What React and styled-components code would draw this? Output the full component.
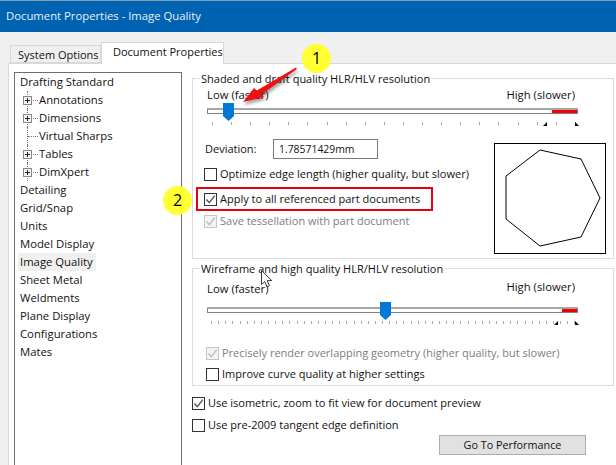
import React from 'react';
import styled, { createGlobalStyle } from 'styled-components';

const GlobalStyle = createGlobalStyle`
  html, body {
    margin: 0;
    padding: 0;
    background: #f0f0f0;
  }
  * {
    box-sizing: border-box;
  }
`;

const Dialog = styled.div`
  position: relative;
  width: 616px;
  height: 465px;
  overflow: hidden;
  background: #f0f0f0;
  color: #111;
  font-family: 'Open Sans', 'Noto Sans', sans-serif;
  font-size: 11.3px;
  line-height: 16px;
  white-space: nowrap;
`;

const TitleBar = styled.div`
  height: 32px;
  padding: 7px 0 0 6px;
  background: #0063b1;
  border-top: 1px solid #7f9fb9;
  color: #e8f1f8;
`;

const TabRow = styled.div`
  display: flex;
  align-items: flex-end;
  height: 31px;
  padding-left: 10px;
`;

const Tab = styled.div`
  position: relative;
  z-index: 1;
  height: ${(p) => (p.$active ? '22px' : '18px')};
  margin-bottom: ${(p) => (p.$active ? '-1px' : '0')};
  padding: ${(p) => (p.$active ? '1px 0 0 11px' : '1px 0 0 7px')};
  width: ${(p) => (p.$active ? '123px' : '91px')};
  background: ${(p) => (p.$active ? '#fff' : '#f0f0f0')};
  border: 1px solid #d9d9d9;
  border-bottom: ${(p) => (p.$active ? 'none' : '1px solid #d9d9d9')};
  font-size: 11px;
`;

const Panel = styled.div`
  display: flex;
  height: 402px;
  margin-left: 8px;
  padding: 8px 0 0 5px;
  background: #fff;
  border: 1px solid #d9d9d9;
  border-width: 1px 0 0 1px;
`;

const TreeBox = styled.div`
  flex: none;
  width: 168px;
  height: 400px;
  padding-left: 3px;
  border: 1px solid #6e6e6e;
`;

const TreeRow = styled.div`
  position: relative;
  display: flex;
  align-items: center;
  height: 18px;
  padding-left: ${(p) => (p.$child ? '21px' : '2px')};
`;

const Selected = styled.span`
  margin-left: -2px;
  padding: 1px 2px;
  width: 78px;
  background: #f0f0f0;
`;

const Dots = styled.span`
  position: absolute;
  left: 9px;
  top: 0;
  width: 11px;
  height: 18px;
  border-left: 1px dotted #777;
  &::after {
    content: '';
    position: absolute;
    left: 0;
    top: 9px;
    width: 10px;
    border-top: 1px dotted #777;
  }
`;

const Expander = styled.span`
  position: absolute;
  z-index: 1;
  left: 5px;
  top: 5px;
  width: 9px;
  height: 9px;
  background: #f4f4f4;
  border: 1px solid #8a8a8a;
  &::before {
    content: '';
    position: absolute;
    left: 1px;
    top: 3px;
    width: 5px;
    height: 1px;
    background: #222;
  }
  &::after {
    content: '';
    position: absolute;
    left: 3px;
    top: 1px;
    width: 1px;
    height: 5px;
    background: #222;
  }
`;

const Side = styled.div`
  flex: none;
  width: 422px;
  margin-left: 10px;
  margin-top: 6px;
`;

const Group = styled.div`
  height: ${(p) => p.$height}px;
  margin-bottom: ${(p) => p.$gap || 0}px;
  padding: 0 14px;
  border: 1px solid #dcdcdc;
`;

const Legend = styled.div`
  width: fit-content;
  height: 16px;
  margin: -8px 0 0 -7px;
  padding: 0 2px 0 1px;
  background: #fff;
  font-size: 11px;
`;

const SliderLabels = styled.div`
  display: flex;
  justify-content: space-between;
  align-items: flex-start;
  width: 371px;
  height: ${(p) => p.$height}px;
  padding-right: 3px;
`;

const SliderLabel = styled.span`
  margin-top: ${(p) => p.$top || 0}px;
`;

const Slider = styled.div`
  position: relative;
  width: 371px;
  height: 18px;
  margin-top: ${(p) => p.$top || 0}px;
  padding-top: 5px;
`;

const Track = styled.div`
  position: relative;
  height: 6px;
  background: #fff;
  border: 1px solid #808080;
  border-top: 2px solid #a6a6a6;
  border-radius: 1px;
`;

const TrackEnd = styled.div`
  position: absolute;
  right: 0;
  top: 0;
  bottom: 0;
  width: ${(p) => p.$width}px;
  background: #f00000;
`;

const Thumb = styled.div`
  position: absolute;
  left: ${(p) => p.$left}px;
  top: 0;
  width: 11px;
  height: 18px;
  background: #0078d7;
  clip-path: polygon(0 0, 100% 0, 100% 72%, 50% 100%, 0 72%);
`;

const TickRow = styled.div`
  position: relative;
  display: flex;
  justify-content: space-between;
  width: ${(p) => p.$width}px;
  height: 3px;
  margin: 1px 0 0 ${(p) => p.$start}px;
`;

const TickMark = styled.span`
  flex: none;
  width: 1px;
  height: 3px;
  background: #ababab;
`;

const Marker = styled.span`
  position: absolute;
  left: ${(p) => p.$left}px;
  top: 0;
  width: 0;
  height: 0;
  border-bottom: 4px solid #000;
  border-left: ${(p) => (p.$flip ? '0' : '4px solid transparent')};
  border-right: ${(p) => (p.$flip ? '4px solid transparent' : '0')};
`;

const Lower = styled.div`
  display: flex;
  justify-content: space-between;
  width: 402px;
  margin: 14px 0 0 -3px;
`;

const LowerLeft = styled.div`
  display: flex;
  flex-direction: column;
`;

const DeviationRow = styled.div`
  display: flex;
  align-items: center;
  height: 20px;
  margin-left: 1px;
  font-size: 11px;
`;

const DeviationLabel = styled.span`
  width: 68px;
`;

const DeviationInput = styled.div`
  width: 105px;
  height: 20px;
  padding: 1px 0 0 5px;
  border: 1px solid #7a7a7a;
  font-size: 10.4px;
`;

const Preview = styled.svg`
  display: block;
  flex: none;
  width: 112px;
  height: 111px;
  margin-top: 4px;
  background: #fff;
  border: 1px solid #000;
`;

const CheckRow = styled.div`
  position: relative;
  display: flex;
  align-items: center;
  gap: 3px;
  height: 16px;
  margin-top: ${(p) => p.$top || 0}px;
  margin-left: ${(p) => p.$left || 0}px;
  color: ${(p) => (p.$disabled ? '#7d7d7d' : '#111')};
  font-size: 11px;
`;

const Box = styled.span`
  display: block;
  flex: none;
  width: 13px;
  height: 13px;
  background: ${(p) => (p.$disabled ? '#f4f4f4' : '#fff')};
  border: 1px solid ${(p) => (p.$disabled ? '#c6c6c6' : '#333')};
`;

const Tick = styled.svg`
  display: block;
  width: 11px;
  height: 11px;
  fill: none;
  stroke: ${(p) => (p.$disabled ? '#bcbcbc' : '#555')};
  stroke-width: 1.4;
`;

const Callout = styled.span`
  position: absolute;
  left: -8px;
  top: -4px;
  width: 237px;
  height: 24px;
  border: 2px solid #e8000e;
  pointer-events: none;
`;

const Badge = styled.span`
  position: absolute;
  z-index: 3;
  display: flex;
  align-items: center;
  justify-content: center;
  width: 29px;
  height: 29px;
  padding-bottom: 2px;
  border-radius: 50%;
  background: #ffff33;
  color: #000;
  font-size: 16px;
`;

const BadgeOne = styled(Badge)`
  left: 302px;
  top: 44px;
`;

const BadgeTwo = styled(Badge)`
  left: -41px;
  top: -5px;
`;

const PerfButton = styled.div`
  width: 147px;
  height: 20px;
  margin: 2px 0 0 247px;
  padding-top: 1px;
  text-align: center;
  background: #e1e1e1;
  border: 1px solid #adadad;
  font-size: 10.8px;
`;

const Overlay = styled.svg`
  position: absolute;
  z-index: 4;
  left: ${(p) => p.$left}px;
  top: ${(p) => p.$top}px;
  overflow: visible;
`;

const treeItems = [
  { label: 'Drafting Standard' },
  { label: 'Annotations', child: true, expand: true },
  { label: 'Dimensions', child: true, expand: true },
  { label: 'Virtual Sharps', child: true },
  { label: 'Tables', child: true, expand: true },
  { label: 'DimXpert', child: true, expand: true },
  { label: 'Detailing' },
  { label: 'Grid/Snap' },
  { label: 'Units' },
  { label: 'Model Display' },
  { label: 'Image Quality', selected: true },
  { label: 'Sheet Metal' },
  { label: 'Weldments' },
  { label: 'Plane Display' },
  { label: 'Configurations' },
  { label: 'Mates' },
];

const Check = ({ checked, disabled, label, top, left, children }) => (
  <CheckRow $top={top} $left={left} $disabled={disabled}>
    <Box $disabled={disabled}>
      {checked && (
        <Tick viewBox="0 0 11 11" $disabled={disabled}>
          <path d="M1.5 5.5 L4.3 8.6 L9.8 1.6" />
        </Tick>
      )}
    </Box>
    <span>{label}</span>
    {children}
  </CheckRow>
);

const Ticks = ({ count, start, width, children }) => (
  <TickRow $start={start} $width={width}>
    {Array.from({ length: count }, (_, i) => (
      <TickMark key={i} />
    ))}
    {children}
  </TickRow>
);

const App = () => {
  return (
    <Dialog>
      <GlobalStyle />
      <TitleBar>Document Properties - Image Quality</TitleBar>
      <TabRow>
        <Tab>System Options</Tab>
        <Tab $active>Document Properties</Tab>
      </TabRow>
      <Panel>
        <TreeBox>
          {treeItems.map((item) => (
            <TreeRow key={item.label} $child={item.child}>
              {item.child && <Dots />}
              {item.expand && <Expander />}
              {item.selected ? <Selected>{item.label}</Selected> : item.label}
            </TreeRow>
          ))}
        </TreeBox>
        <Side>
          <Group $height={181} $gap={9}>
            <Legend>Shaded and draft quality HLR/HLV resolution</Legend>
            <SliderLabels $height={16}>
              <SliderLabel>Low (faster)</SliderLabel>
              <SliderLabel>High (slower)</SliderLabel>
            </SliderLabels>
            <Slider>
              <Track>
                <TrackEnd $width={25} />
              </Track>
              <Thumb $left={16} />
            </Slider>
            <Ticks count={20} start={5} width={364}>
              <Marker $left={331} />
              <Marker $left={363} $flip />
            </Ticks>
            <Lower>
              <LowerLeft>
                <DeviationRow>
                  <DeviationLabel>Deviation:</DeviationLabel>
                  <DeviationInput>1.78571429mm</DeviationInput>
                </DeviationRow>
                <Check top={7} label="Optimize edge length (higher quality, but slower)" />
                <Check top={9} checked label="Apply to all referenced part documents">
                  <Callout />
                  <BadgeTwo>2</BadgeTwo>
                </Check>
                <Check top={6} checked disabled label="Save tessellation with part document" />
              </LowerLeft>
              <Preview viewBox="0 0 110 109">
                <polygon
                  points="45,6 86,15 105,54 86,93 45,102 11,75 11,32"
                  fill="none"
                  stroke="#000"
                  strokeWidth="1"
                />
              </Preview>
            </Lower>
          </Group>
          <Group $height={118}>
            <Legend>Wireframe and high quality HLR/HLV resolution</Legend>
            <SliderLabels $height={20}>
              <SliderLabel $top={4}>Low (faster)</SliderLabel>
              <SliderLabel $top={2}>High (slower)</SliderLabel>
            </SliderLabels>
            <Slider $top={5}>
              <Track>
                <TrackEnd $width={15} />
              </Track>
              <Thumb $left={173} />
            </Slider>
            <Ticks count={52} start={4} width={365}>
              <Marker $left={343} />
              <Marker $left={364} $flip />
            </Ticks>
            <Check top={21} left={-1} checked disabled label="Precisely render overlapping geometry (higher quality, but slower)" />
            <Check top={5} left={-1} label="Improve curve quality at higher settings" />
          </Group>
          <Check top={9} checked label="Use isometric, zoom to fit view for document preview" />
          <Check top={6} label="Use pre-2009 tangent edge definition" />
          <PerfButton>Go To Performance</PerfButton>
        </Side>
      </Panel>
      <BadgeOne>1</BadgeOne>
      {/* red callout arrow */}
      <Overlay $left={240} $top={64} width="60" height="42" style={{ filter: 'drop-shadow(1px 3px 1.5px rgba(0,0,0,0.35))' }}>
        <polygon points="56,3.5 57,5 21,31 16,27" fill="#ee1111" />
        <polygon points="3,38 14,24 24,33" fill="#ee1111" />
      </Overlay>
      {/* mouse pointer */}
      <Overlay $left={261} $top={270} width="13" height="20">
        <path
          d="M0.5 0.5 L0.5 14.5 L3.8 11.5 L6 16.8 L8.4 15.8 L6.2 10.6 L10.8 10.6 Z"
          fill="#fff"
          stroke="#222"
          strokeWidth="0.9"
        />
      </Overlay>
    </Dialog>
  );
};

export default App;
